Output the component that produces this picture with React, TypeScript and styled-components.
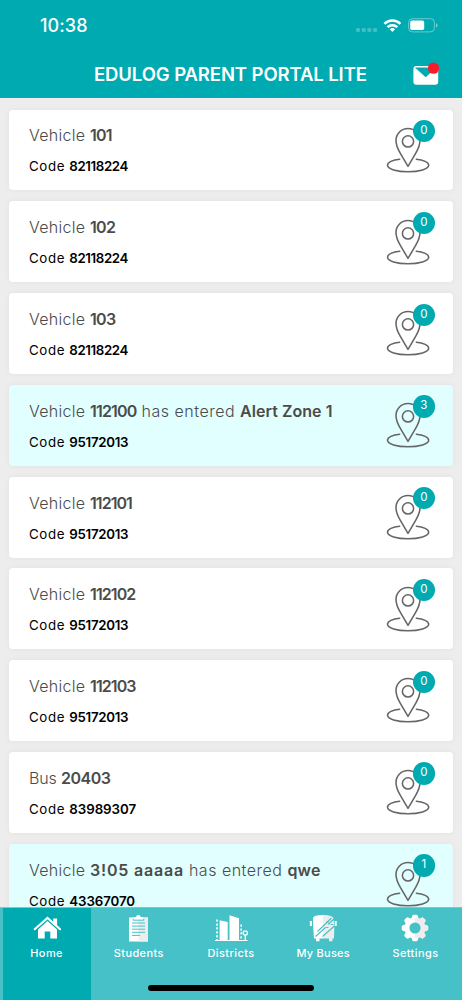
import React from "react";
import styled, { createGlobalStyle } from "styled-components";

const TEAL = "#00aab1";

const GlobalStyle = createGlobalStyle`
  * { box-sizing: border-box; }
  body { margin: 0; background: #ededed; font-family: Inter, "Liberation Sans", sans-serif; }
`;

const Screen = styled.div`
  width: 462px;
  height: 1000px;
  display: flex;
  flex-direction: column;
  overflow: hidden;
  background: #ededed;
`;

const Header = styled.header`
  flex: 0 0 98.4px;
  background: ${TEAL};
  color: #fff;
`;

const StatusBar = styled.div`
  height: 50px;
  padding: 2px 24px 0 40px;
  display: flex;
  align-items: center;
  justify-content: space-between;
`;

const Clock = styled.span`
  font-size: 18px;
  font-weight: 550;
  line-height: 20px;
  letter-spacing: 0.1px;
`;

const TitleBar = styled.div`
  height: 48px;
  display: flex;
  align-items: center;
  padding: 0 22px 0 94px;
  justify-content: space-between;
`;

const Title = styled.h1<{ $track: number }>`
  margin: 0;
  font-size: 18.5px;
  line-height: 24px;
  font-weight: 600;
  white-space: nowrap;
  letter-spacing: ${(p) => p.$track}px;
`;

const List = styled.main`
  flex: 1 1 0;
  min-height: 0;
  overflow: hidden;
  padding: 11.2px 9px 0;
  display: flex;
  flex-direction: column;
  gap: 10.9px;
`;

const Card = styled.article<{ $alert: boolean }>`
  flex: 0 0 80.9px;
  display: flex;
  justify-content: space-between;
  padding: 13.8px 15px 0 20px;
  border-radius: 4px;
  background: ${(p) => (p.$alert ? "#e1ffff" : "#fff")};
  box-shadow: 0 0 6px rgba(0, 0, 0, 0.05);
`;

const Lines = styled.div`
  display: flex;
  flex-direction: column;
  gap: 9px;
  white-space: pre;
`;

const Line = styled.div`
  height: 24px;
  line-height: 24px;
  font-size: 16px;
  color: #4b4b4b;
`;

const CodeLine = styled(Line)`
  height: 20px;
  line-height: 20px;
  font-size: 13.3px;
  color: #000;
`;

const Run = styled.span<{ $bold?: boolean; $track: number }>`
  font-weight: ${(p) => (p.$bold ? 600 : 350)};
  letter-spacing: ${(p) => p.$track}px;
`;

const CodeLabel = styled(Run)`
  font-weight: 400;
`;

const Marker = styled.div`
  position: relative;
  width: 52px;
  height: 56px;
  margin-top: 0.4px;
`;

const Badge = styled.span`
  position: absolute;
  top: -3.8px;
  right: 3px;
  width: 22.4px;
  height: 22.4px;
  border-radius: 50%;
  background: ${TEAL};
  color: #fff;
  font-size: 11.5px;
  line-height: 21px;
  text-align: center;
`;

const TabBar = styled.nav`
  position: relative;
  flex: 0 0 93.5px;
  display: flex;
  padding: 0 0.5px;
  background: #45c1c7;
  border-top: 1px solid #70cdd1;
`;

const Tab = styled.div<{ $active: boolean }>`
  flex: 1 1 0;
  margin: 0 2px;
  padding-top: 6px;
  display: flex;
  flex-direction: column;
  align-items: center;
  background: ${(p) => (p.$active ? TEAL : "transparent")};
  color: #fff;
`;

const TabLabel = styled.span<{ $track: number }>`
  margin-top: 2px;
  font-size: 11px;
  line-height: 18px;
  font-weight: 500;
  white-space: nowrap;
  letter-spacing: ${(p) => p.$track}px;
`;

const HomeIndicator = styled.div`
  position: absolute;
  left: 148px;
  bottom: 9px;
  width: 166px;
  height: 5.6px;
  border-radius: 3px;
  background: #000;
`;

const StatusIcons = () => (
  <svg width="84" height="20" viewBox="354 16 84 20">
    <g fill="#fff" fillOpacity="0.25">
      <rect x="356" y="28" width="4" height="4" rx="1.2" />
      <rect x="361.7" y="28" width="4" height="4" rx="1.2" />
      <rect x="367.3" y="28" width="4" height="4" rx="1.2" />
      <rect x="373" y="28" width="4" height="4" rx="1.2" />
    </g>
    <g fill="none" stroke="#fff" strokeWidth="2.5">
      <path d="M384.4 23.8a11.4 11.4 0 0 1 16 0" />
      <path d="M387.5 27.2a7 7 0 0 1 9.8 0" />
    </g>
    <path d="M389.7 29.3a4 4 0 0 1 5.4 0l-2.7 2.7z" fill="#fff" />
    <rect x="408.6" y="18.7" width="25.8" height="13.2" rx="3.8" fill="none" stroke="#fff" strokeOpacity="0.4" />
    <rect x="410.2" y="20.6" width="14" height="9.4" rx="1.8" fill="#fff" />
    <path d="M436 23.2q1.7.7 1.7 2.2t-1.7 2.2z" fill="#fff" fillOpacity="0.45" />
  </svg>
);

const MailIcon = () => (
  <svg width="28" height="28" viewBox="412.3 60 28 28">
    <rect x="413.7" y="66" width="24.8" height="18.8" rx="3" fill="#fff" />
    <path d="M415.2 67.6L426 77.2L436.8 67.6" fill={TEAL} />
    <circle cx="433.8" cy="68.2" r="5.6" fill="#fc1b2d" />
  </svg>
);

const PinIcon = () => (
  <svg width="52" height="56" viewBox="386 123.6 52 56" fill="none" stroke="#666" strokeWidth="1.55">
    <path d="M408 166L400.2 152.7C396.7 146.8 396 143.5 396 140.1A12 12 0 0 1 420 140.1C420 143.5 419.2 146.8 415.8 152.7Z" strokeLinejoin="round" />
    <circle cx="408" cy="141" r="5.6" />
    <path d="M399.7 158.8C392.6 159.5 387.5 162 387.5 164.9C387.5 168.7 396.8 171.4 408 171.4S428.7 168.7 428.7 164.9C428.7 162 423.4 159.5 416.3 158.8" strokeLinecap="round" />
  </svg>
);

const HomeIcon = () => (
  <svg width="28" height="28" viewBox="32 914 28 28">
    <path d="M37 929.6L46.5 921L56 929.6V938.6H49.3V931.5H43.7V938.6H37Z" fill="#fff" />
    <path d="M33.7 929.2L46.5 918L59.1 929.2" fill="none" stroke="#fff" strokeWidth="2.1" strokeLinecap="round" />
    <path d="M52.2 918.5H56.1V926L52.2 922.5Z" fill="#fff" />
  </svg>
);

const ClipboardIcon = () => (
  <svg width="28" height="28" viewBox="125 914 28 28">
    <path d="M129 917.5H148V941.5H129Z" fill="#fff" />
    <path d="M138.5 917.5H148V941.5H138.5Z" fill="#ededed" />
    <path d="M133.5 919V917.2H136Q136.2 915 138.4 915T140.8 917.2H143.5V919.5H133.5Z" fill="#fff" />
    <path d="M133.2 918.7V920.2H143.8V918.7M132 923H145M132 926.1H145M132 929.2H145M132 932.3H145M132 935.4H140" fill="none" stroke="#45c1c7" strokeWidth="1" />
  </svg>
);

const DistrictsIcon = () => (
  <svg width="34" height="28" viewBox="213.5 914 34 28" fill="none" stroke="#fff">
    <path d="M219.1 920.2L227.2 922V940H219.1ZM229 915.2L238.5 918.2V940H229Z" fill="#fff" stroke="none" />
    <path d="M214.5 940.5H247" strokeWidth="1.2" />
    <path d="M216.5 919.5V940M240.7 924.5V940" strokeWidth="1.6" strokeDasharray="2.3 1.6" />
    <circle cx="244.8" cy="933" r="2.1" strokeWidth="1.4" />
    <path d="M244.8 935V940" strokeWidth="1.4" />
  </svg>
);

const BusIcon = () => (
  <svg width="28" height="28" viewBox="308.5 914 28 28">
    <path d="M312.5 918Q313 915 322.5 915V938.5H319V941.2H315.5V938.5H313.5Q312.5 928 312.5 918Z" fill="#fff" />
    <path d="M322.5 915Q332.5 915 333 918.5Q334.5 928 333.5 938.5H332V941.2H328.5V938.5H322.5Z" fill="#ededed" />
    <path d="M309.3 921H311.5V926H309.3ZM334.2 921H336.2V926H334.2Z" fill="#fff" />
    <path d="M317 931.5L331 918M315 936.5L325 927.5M327.5 924.5L334 918.5M322 936.5L334 926" stroke="#45c1c7" strokeWidth="1.1" />
    <path d="M325.5 922H328.5M330 924.5H333M325 927.5H328" stroke="#45c1c7" strokeWidth="0.9" />
  </svg>
);

const GearIcon = () => (
  <svg width="28" height="28" viewBox="-14 -14 28 28">
    <g fill="#fff">
      {[0, 45, 90, 135, 180, 225, 270, 315].map((a) => (
        <path key={a} d="M-3.8 -8.8L-2.7 -12.2Q-2.4 -13.3 -1.3 -13.3H1.3Q2.4 -13.3 2.7 -12.2L3.8 -8.8Z" transform={`rotate(${a})`} fill={a > 0 && a < 180 ? "#ededed" : "#fff"} />
      ))}
    </g>
    <path d="M0 -8A8 8 0 0 0 0 8" fill="none" stroke="#fff" strokeWidth="4.8" />
    <path d="M0 -8A8 8 0 0 1 0 8" fill="none" stroke="#ededed" strokeWidth="4.8" />
  </svg>
);

type Piece = { text: string; bold?: boolean; track: number };
type Vehicle = { pieces: Piece[]; code: string; codeTrack: number; count: number };

const vehicle: Piece = { text: "Vehicle ", track: 0.27 };
const entered: Piece = { text: " has entered ", track: 0.5 };
const b = (text: string, track: number): Piece => ({ text, track, bold: true });

const vehicles: Vehicle[] = [
  { pieces: [vehicle, b("101", -0.8)], code: "82118224", codeTrack: -0.4, count: 0 },
  { pieces: [vehicle, b("102", -0.7)], code: "82118224", codeTrack: -0.4, count: 0 },
  { pieces: [vehicle, b("103", -0.7)], code: "82118224", codeTrack: -0.4, count: 0 },
  { pieces: [vehicle, b("112100", -0.8), entered, b("Alert Zone 1", 0.05)], code: "95172013", codeTrack: -0.3, count: 3 },
  { pieces: [vehicle, b("112101", -0.95)], code: "95172013", codeTrack: -0.3, count: 0 },
  { pieces: [vehicle, b("112102", -0.9)], code: "95172013", codeTrack: -0.3, count: 0 },
  { pieces: [vehicle, b("112103", -0.9)], code: "95172013", codeTrack: -0.3, count: 0 },
  { pieces: [{ text: "Bus ", track: -0.15 }, b("20403", -0.5)], code: "83989307", codeTrack: -0.05, count: 0 },
  { pieces: [vehicle, b("3!05 aaaaa", 0.8), entered, b("qwe", 0.2)], code: "43367070", codeTrack: -0.1, count: 1 },
];

const tabs = [
  { label: "Home", Icon: HomeIcon, track: 0.4 },
  { label: "Students", Icon: ClipboardIcon, track: 0.4 },
  { label: "Districts", Icon: DistrictsIcon, track: 0.4 },
  { label: "My Buses", Icon: BusIcon, track: 0.25 },
  { label: "Settings", Icon: GearIcon, track: 0.4 },
];

export default function App() {
  return (
    <Screen>
      <GlobalStyle />
      <Header>
        <StatusBar>
          <Clock>10:38</Clock>
          <StatusIcons />
        </StatusBar>
        <TitleBar>
          <Title $track={-0.1}>EDULOG PARENT PORTAL LITE</Title>
          <MailIcon />
        </TitleBar>
      </Header>
      <List>
        {vehicles.map((v, i) => (
          <Card key={i} $alert={v.count > 0}>
            <Lines>
              <Line>
                {v.pieces.map((p, j) => (
                  <Run key={j} $bold={p.bold} $track={p.track}>{p.text}</Run>
                ))}
              </Line>
              <CodeLine>
                <CodeLabel $track={0.6}>{"Code "}</CodeLabel>
                <Run $bold $track={v.codeTrack}>{v.code}</Run>
              </CodeLine>
            </Lines>
            <Marker>
              <PinIcon />
              <Badge>{v.count}</Badge>
            </Marker>
          </Card>
        ))}
      </List>
      <TabBar>
        {tabs.map(({ label, Icon, track }, i) => (
          <Tab key={label} $active={i === 0}>
            <Icon />
            <TabLabel $track={track}>{label}</TabLabel>
          </Tab>
        ))}
        <HomeIndicator />
      </TabBar>
    </Screen>
  );
}
